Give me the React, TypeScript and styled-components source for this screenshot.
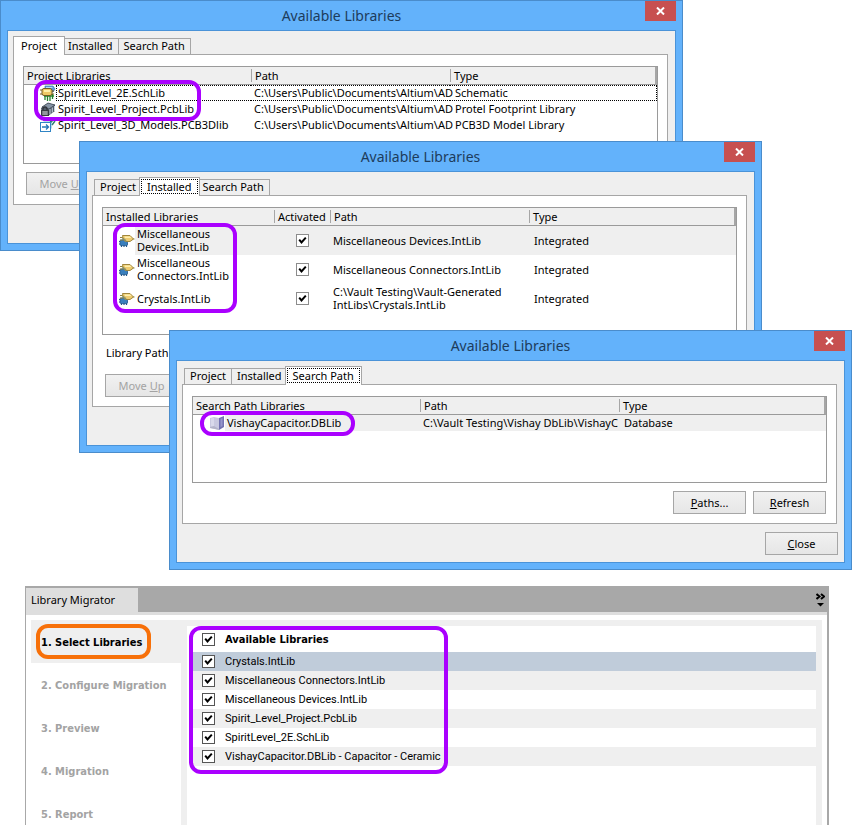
import React from "react";
import styled, { createGlobalStyle, css } from "styled-components";

const GlobalStyle = createGlobalStyle`
  * { box-sizing: border-box; }
  body { margin: 0; background: #fff; color: #000; }
  button, input, table { font: inherit; color: inherit; }
`;

const Page = styled.main`
  display: flex;
  flex-direction: column;
  gap: 16px;
  height: 100vh;
  overflow: hidden;
  font: 11px/13px "Noto Sans", "Open Sans", sans-serif;
`;

const Desktop = styled.div`
  display: grid;
  flex: none;
`;

const WindowFrame = styled.section<{ $top: number; $left: number; $right: number }>`
  position: relative;
  grid-area: 1 / 1;
  align-self: start;
  margin: ${(p) => `${p.$top}px ${p.$right}px 0 ${p.$left}px`};
  padding: 0 6px 6px;
  border: 1px solid #4a8ccb;
  background: #63b2fb;
`;

const TitleBar = styled.header`
  display: grid;
  grid-template-columns: 31px 1fr 31px;
  height: 29px;
`;

const Title = styled.h2`
  grid-column: 2;
  margin: 0;
  font-size: 14px;
  line-height: 29px;
  font-weight: 400;
  text-align: center;
  color: #1d3c5c;
`;

const CloseBox = styled.button`
  display: grid;
  place-items: center;
  height: 20px;
  padding: 0;
  border: 0;
  background: #c75050;
`;

const Client = styled.div`
  padding: 5px;
  border: 1px solid #4a93d8;
  background: #efefef;
`;

const Tabs = styled.nav`
  display: flex;
  align-items: flex-end;
  height: 19px;
  padding: 0 3px;
  margin-bottom: -1px;
`;

const Tab = styled.button<{ $active: boolean }>`
  height: 17px;
  padding: 0 5px 3px;
  border: 1px solid #a6a6a6;
  margin-left: -1px;
  background: #efefef;
  line-height: 13px;
  white-space: nowrap;
  ${(p) =>
    p.$active &&
    css`
      position: relative;
      z-index: 1;
      height: 19px;
      padding: 1px 1px 3px;
      margin: 0 -2px 0 -3px;
      border-bottom: 0;
      background: #fff;
    `}
`;

const TabText = styled.span<{ $focus: boolean }>`
  display: block;
  padding: 0 5px;
  border: 1px ${(p) => (p.$focus ? "dotted #000" : "solid transparent")};
`;

const Panel = styled.div`
  margin-right: 2px;
  padding: 11px 9px 9px;
  border: 1px solid #a6a6a6;
  background: #fff;
`;

const TableBox = styled.div<{ $height: number }>`
  min-height: ${(p) => p.$height}px;
  border: 1px solid #9a9a9a;
`;

const Table = styled.table`
  width: 100%;
  table-layout: fixed;
  border-collapse: separate;
  border-spacing: 0;
`;

const Col = styled.col<{ $width?: number }>`
  width: ${(p) => (p.$width ? `${p.$width}px` : "auto")};
`;

const HeadCell = styled.th`
  height: 18px;
  padding: 1px 0 2px;
  border-bottom: 1px solid #9a9a9a;
  background: #efefef;
  font-weight: 400;
  text-align: left;
  white-space: nowrap;
  &:last-child {
    border-right: 2px solid #a6a6a6;
  }
`;

const HeadText = styled.span`
  display: block;
  padding-left: 3px;
  ${HeadCell} + ${HeadCell} & {
    border-left: 1px solid #a6a6a6;
  }
`;

const Cell = styled.td<{ $shaded?: boolean; $focus?: boolean; $tall?: boolean }>`
  height: ${(p) => (p.$tall ? 29 : 16)}px;
  padding: 0 0 ${(p) => (p.$focus ? 0 : 1)}px 3px;
  white-space: ${(p) => (p.$tall ? "pre-line" : "nowrap")};
  background: ${(p) => (p.$shaded ? "#efefef" : "transparent")};
  &:last-child {
    padding-left: 5px;
  }
  ${(p) =>
    p.$focus &&
    css`
      border: 1px dotted #000;
      border-width: 1px 0;
      line-height: 12px;
      &:last-child {
        border-right-width: 1px;
      }
    `}
`;

const NameCell = styled(Cell)`
  padding: 0;
  border: 0;
  background: transparent;
`;

const Name = styled.div<{ $tall?: boolean }>`
  display: grid;
  grid-template-columns: 16px 1fr;
  align-items: center;
  height: ${(p) => (p.$tall ? 29 : 16)}px;
  padding-left: 16px;
`;

const NameText = styled.span<{ $shaded?: boolean; $focus?: boolean }>`
  display: flex;
  align-items: center;
  align-self: stretch;
  padding: 0 0 1px 2px;
  background: ${(p) => (p.$shaded ? "#efefef" : "transparent")};
  ${(p) =>
    p.$focus &&
    css`
      padding: 0 0 0 1px;
      border: 1px dotted #000;
      border-right: 0;
      line-height: 12px;
    `}
`;

const Actions = styled.div<{ $end?: boolean }>`
  display: flex;
  gap: 7px;
  justify-content: ${(p) => (p.$end ? "flex-end" : "flex-start")};
  padding: ${(p) => (p.$end ? "8px 1px 0" : "8px 3px 0")};
`;

const Button = styled.button`
  width: 73px;
  height: 23px;
  padding: 0;
  border: 1px solid #a6a6a6;
  background: linear-gradient(#f1f1f1, #e6e6e6);
  &:disabled {
    color: #a3a3a3;
  }
`;

const PathLabel = styled.div`
  padding: 11px 4px 7px;
`;

const Footer = styled.footer`
  display: flex;
  justify-content: flex-end;
  height: 33px;
  padding: 8px 1px 0;
`;

const Marker = styled.span<{ $x: number; $y: number; $w: number; $h: number; $orange?: boolean }>`
  position: absolute;
  z-index: 2;
  left: ${(p) => p.$x}px;
  top: ${(p) => p.$y}px;
  width: ${(p) => p.$w}px;
  height: ${(p) => p.$h}px;
  border: 4px solid ${(p) => (p.$orange ? "#f77009" : "#aa00ff")};
  border-radius: 12px;
  pointer-events: none;
`;

const CheckBoxWrap = styled.span`
  display: inline-grid;
  width: 13px;
  height: 13px;
  vertical-align: middle;
  > * {
    grid-area: 1 / 1;
  }
  > svg {
    pointer-events: none;
    visibility: hidden;
  }
  > input:checked + svg {
    visibility: visible;
  }
`;

const CheckInput = styled.input<{ $dark?: boolean }>`
  appearance: none;
  width: 13px;
  height: 13px;
  margin: 0;
  border: 1px solid ${(p) => (p.$dark ? "#555" : "#8c8c8c")};
  background: #fff;
`;

const CheckCell = styled(Cell)`
  padding: 0 0 2px;
  text-align: center;
`;

const Migrator = styled.section`
  position: relative;
  flex: 1;
  min-height: 0;
  margin: 0 23px 0 25px;
  border: solid #a8a8a8;
  border-width: 2px 2px 0 1px;
  overflow: hidden;
`;

const MigratorBar = styled.header`
  display: flex;
  justify-content: space-between;
  height: 27px;
  border-bottom: 3px solid #dedede;
  background: #a8a8a8;
`;

const MigratorTitle = styled.h2`
  width: 112px;
  margin: 0;
  padding: 0 5px;
  background: #dedede;
  font-size: 11px;
  line-height: 23px;
  font-weight: 400;
  white-space: nowrap;
`;

const MenuButton = styled.button`
  display: grid;
  place-items: center;
  width: 13px;
  padding: 0;
  border: 0;
  background: none;
`;

const MigratorBody = styled.div`
  display: grid;
  grid-template-columns: 150px 1fr;
  gap: 6px;
  margin: 5px 5px 0;
  padding-right: 6px;
  background: #efefef;
`;

const Steps = styled.nav`
  display: flex;
  flex-direction: column;
`;

const Step = styled.button<{ $active: boolean }>`
  height: 43px;
  padding: 2px 10px 0;
  border: 0;
  background: ${(p) => (p.$active ? "#efefef" : "#fff")};
  color: ${(p) => (p.$active ? "#000" : "#a3a3a3")};
  font-family: "DejaVu Sans Condensed", "DejaVu Sans", sans-serif;
  font-weight: 700;
  text-align: left;
  white-space: nowrap;
`;

const List = styled.div`
  margin-top: 6px;
  padding-left: 5px;
  background: #fff;
`;

const ListRow = styled.label<{ $tone: "head" | "selected" | "shaded" | "plain" }>`
  display: flex;
  align-items: center;
  gap: 10px;
  height: ${(p) => (p.$tone === "head" ? 26 : 19)}px;
  padding-left: 10px;
  font-family: ${(p) =>
    p.$tone === "head" ? '"DejaVu Sans Condensed", "DejaVu Sans", sans-serif' : "Roboto, sans-serif"};
  font-weight: ${(p) => (p.$tone === "head" ? 700 : 400)};
  background: ${(p) =>
    p.$tone === "selected" ? "#c0ccda" : p.$tone === "shaded" ? "#efefef" : "#fff"};
`;

const CheckBox = ({ label, dark }: { label?: string; dark?: boolean }) => (
  <CheckBoxWrap>
    <CheckInput type="checkbox" defaultChecked aria-label={label} $dark={dark} />
    <svg width="13" height="13" viewBox="0 0 13 13" fill="none" stroke="#000" strokeWidth="2">
      <path d="M3.2 5.6 5.5 8.4 9.8 3.6" />
    </svg>
  </CheckBoxWrap>
);

const SchematicIcon = () => (
  <svg width="16" height="16" viewBox="0 0 16 16">
    <path d="M5 1h8l2 3-2 3H5z" fill="#5d9bd8" stroke="#3d75b5" strokeWidth=".7" />
    <path d="M6 2h6l1 1H6z" fill="#b5daf6" />
    <path d="M4 11h10M5 10v5M7.5 10v6M10 10v6M12.5 9v5" stroke="#26832c" strokeWidth="1.3" />
    <path d="M0 5h3M0 9h3M11 6h3M11 9h3" stroke="#7c5d20" />
    <rect x="2" y="3.5" width="10" height="7" rx="2" fill="#efc964" stroke="#725b24" />
    <path d="M4 5h6v2H4z" fill="#fff0a8" />
  </svg>
);

const FootprintIcon = () => (
  <svg width="16" height="16" viewBox="0 0 16 16">
    <path d="m1 7 7-5 7 2v6l-7 5-6-2z" fill="#525d6b" />
    <path d="m2 6 6-4 7 2-6 4z" fill="#8795a5" stroke="#3e4854" strokeWidth=".8" />
    <path d="M10 8v5M12.3 6.5v5M14.5 5v5" stroke="#cbd5df" />
    <path d="M3 10V8q0-2 2-2t2 2v2" fill="none" stroke="#30343a" strokeWidth="1.3" />
    <rect x="1.5" y="9.5" width="7" height="5" fill="#7a7e84" stroke="#383c42" />
    <path d="M3 11h4M3 13h4" stroke="#aeb1b5" />
  </svg>
);

const ModelIcon = () => (
  <svg width="16" height="16" viewBox="0 0 16 16">
    <path d="m3 4 4-3h9l-4 4v7" fill="#b8dde8" />
    <path d="M3 3h7l1 2 4-4M12 8l3-4" fill="none" stroke="#347f75" strokeWidth="1.5" />
    <rect x=".5" y="5.5" width="10" height="9" fill="#fff" stroke="#3085c5" />
    <path d="M2 10h6M6 7.5 8.5 10 6 12.5" fill="none" stroke="#2477b7" strokeWidth="1.3" />
  </svg>
);

const IntegratedIcon = () => (
  <svg width="16" height="16" viewBox="0 0 16 16">
    <path d="M0 8.5h9M0 11h9M2.5 7v7M5 7v7M7.5 7v7" stroke="#24578b" strokeWidth="1.2" />
    <rect x="1" y="7" width="7.5" height="5.5" rx="1" fill="#397fbd" stroke="#235789" strokeWidth=".7" />
    <path d="M1 4.5h3M1 7h3M13 6h2.5" stroke="#8b8446" />
    <path d="M3.5 2.5H11L14.5 6 11 8.5H6.5Q3.5 7.5 3.5 2.5Z" fill="#efcc70" stroke="#a2873c" />
    <path d="M5.5 3.5H11l1.5 1.5H6z" fill="#fff0ae" />
    <path d="M3 6h2.5l2 2.5" fill="none" stroke="#68846d" />
  </svg>
);

const DatabaseIcon = () => (
  <svg width="16" height="16" viewBox="0 0 16 16">
    <path d="m1 3 4-1 5 1v12l-4-1-5-1z" fill="#c9c9e0" />
    <path d="M2 3.5 5 3v9l-3-.5z" fill="#d9d9eb" />
    <path d="m10 3 5-2v11l-5 3z" fill="#7373b2" />
    <path d="m11.5 4 2-1v8l-2 1z" fill="#9696cb" />
    <path d="m1 12 4-1 5 3v1l-4-1-5-1z" fill="#b4b4ca" />
  </svg>
);

type Column = { title: string; width?: number };
type Row = { icon: React.ReactNode; name: string; cells: string[]; shaded?: boolean; focus?: boolean };

function LibraryTable(props: { columns: Column[]; rows: Row[]; height: number; tall?: boolean }) {
  const { columns, rows, height, tall } = props;
  return (
    <TableBox $height={height}>
      <Table>
        <colgroup>
          {columns.map((c) => (
            <Col key={c.title} $width={c.width} />
          ))}
        </colgroup>
        <thead>
          <tr>
            {columns.map((c) => (
              <HeadCell key={c.title} scope="col">
                <HeadText>{c.title}</HeadText>
              </HeadCell>
            ))}
          </tr>
        </thead>
        <tbody>
          {rows.map((r) => {
            const state = { $shaded: r.shaded, $focus: r.focus, $tall: tall };
            return (
              <tr key={r.name}>
                <NameCell $tall={tall}>
                  <Name $tall={tall}>
                    {r.icon}
                    <NameText $shaded={r.shaded} $focus={r.focus}>{r.name}</NameText>
                  </Name>
                </NameCell>
                {tall && (
                  <CheckCell {...state}>
                    <CheckBox label={`Activate ${r.name}`} />
                  </CheckCell>
                )}
                {r.cells.map((c, i) => (
                  <Cell key={i} {...state}>{c}</Cell>
                ))}
              </tr>
            );
          })}
        </tbody>
      </Table>
    </TableBox>
  );
}

type DialogProps = {
  top: number;
  left: number;
  right: number;
  active: string;
  focus?: boolean;
  footer?: React.ReactNode;
  marker: React.ReactNode;
  children: React.ReactNode;
};

function Dialog({ top, left, right, active, focus = false, footer, marker, children }: DialogProps) {
  return (
    <WindowFrame $top={top} $left={left} $right={right}>
      <TitleBar>
        <Title>Available Libraries</Title>
        <CloseBox aria-label="Close window">
          <svg width="9" height="8" viewBox="0 0 9 8" stroke="#fff" strokeWidth="2">
            <path d="m1 .5 7 7M8 .5l-7 7" />
          </svg>
        </CloseBox>
      </TitleBar>
      <Client>
        <Tabs>
          {["Project", "Installed", "Search Path"].map((t) => (
            <Tab key={t} $active={t === active}>
              {t === active ? <TabText $focus={focus}>{t}</TabText> : t}
            </Tab>
          ))}
        </Tabs>
        <Panel>{children}</Panel>
        <Footer>{footer}</Footer>
      </Client>
      {marker}
    </WindowFrame>
  );
}

const docs = "C:\\Users\\Public\\Documents\\Altium\\AD";

export default function App() {
  return (
    <>
      <GlobalStyle />
      <Page>
        <Desktop>
          <Dialog top={0} left={0} right={169} active="Project" marker={<Marker $x={33} $y={79} $w={167} $h={41} />}>
            <LibraryTable
              height={98}
              columns={[{ title: "Project Libraries", width: 227 }, { title: "Path", width: 199 }, { title: "Type" }]}
              rows={[
                { icon: <SchematicIcon />, name: "SpiritLevel_2E.SchLib", cells: [docs, "Schematic"], focus: true },
                { icon: <FootprintIcon />, name: "Spirit_Level_Project.PcbLib", cells: [docs, "Protel Footprint Library"] },
                { icon: <ModelIcon />, name: "Spirit_Level_3D_Models.PCB3Dlib", cells: [docs, "PCB3D Model Library"] },
              ]}
            />
            <Actions>
              <Button disabled>Move <u>U</u>p</Button>
            </Actions>
          </Dialog>

          <Dialog top={141} left={79} right={90} active="Installed" focus marker={<Marker $x={33} $y={81} $w={124} $h={90} />}>
            <LibraryTable
              tall
              height={128}
              columns={[
                { title: "Installed Libraries", width: 171 },
                { title: "Activated", width: 56 },
                { title: "Path", width: 199 },
                { title: "Type" },
              ]}
              rows={[
                { icon: <IntegratedIcon />, name: "Miscellaneous Devices.IntLib", cells: ["Miscellaneous Devices.IntLib", "Integrated"], shaded: true },
                { icon: <IntegratedIcon />, name: "Miscellaneous Connectors.IntLib", cells: ["Miscellaneous Connectors.IntLib", "Integrated"] },
                { icon: <IntegratedIcon />, name: "Crystals.IntLib", cells: ["C:\\Vault Testing\\Vault-Generated\nIntLibs\\Crystals.IntLib", "Integrated"] },
              ]}
            />
            <PathLabel>Library Path</PathLabel>
            <Actions>
              <Button disabled>Move <u>U</u>p</Button>
            </Actions>
          </Dialog>

          <Dialog
            top={330}
            left={169}
            right={0}
            active="Search Path"
            focus
            footer={<Button><u>C</u>lose</Button>}
            marker={<Marker $x={30} $y={80} $w={155} $h={25} />}
          >
            <LibraryTable
              height={87}
              columns={[{ title: "Search Path Libraries", width: 227 }, { title: "Path", width: 199 }, { title: "Type" }]}
              rows={[
                {
                  icon: <DatabaseIcon />,
                  name: "VishayCapacitor.DBLib",
                  cells: ["C:\\Vault Testing\\Vishay DbLib\\VishayC", "Database"],
                  shaded: true,
                },
              ]}
            />
            <Actions $end>
              <Button><u>P</u>aths...</Button>
              <Button><u>R</u>efresh</Button>
            </Actions>
          </Dialog>
        </Desktop>

        <Migrator>
          <MigratorBar>
            <MigratorTitle>Library Migrator</MigratorTitle>
            <MenuButton aria-label="Panel menu">
              <svg width="9" height="14" viewBox="0 0 9 14">
                <path d="m.5 1 3 2.5-3 2.5M5 1l3 2.5L5 6" fill="none" stroke="#000" strokeWidth="2" />
                <path d="M1 10h7l-3.5 3.5z" />
              </svg>
            </MenuButton>
          </MigratorBar>
          <MigratorBody>
            <Steps>
              {["1. Select Libraries", "2. Configure Migration", "3. Preview", "4. Migration", "5. Report"].map((s, i) => (
                <Step key={s} $active={i === 0}>{s}</Step>
              ))}
            </Steps>
            <List>
              <ListRow $tone="head"><CheckBox dark />Available Libraries</ListRow>
              {[
                "Crystals.IntLib",
                "Miscellaneous Connectors.IntLib",
                "Miscellaneous Devices.IntLib",
                "Spirit_Level_Project.PcbLib",
                "SpiritLevel_2E.SchLib",
                "VishayCapacitor.DBLib - Capacitor - Ceramic",
              ].map((n, i) => (
                <ListRow key={n} $tone={i === 0 ? "selected" : i % 2 ? "shaded" : "plain"}>
                  <CheckBox dark />
                  {n}
                </ListRow>
              ))}
            </List>
          </MigratorBody>
          <Marker $orange $x={10} $y={36} $w={115} $h={35} />
          <Marker $x={163} $y={38} $w={259} $h={148} />
        </Migrator>
      </Page>
    </>
  );
}
